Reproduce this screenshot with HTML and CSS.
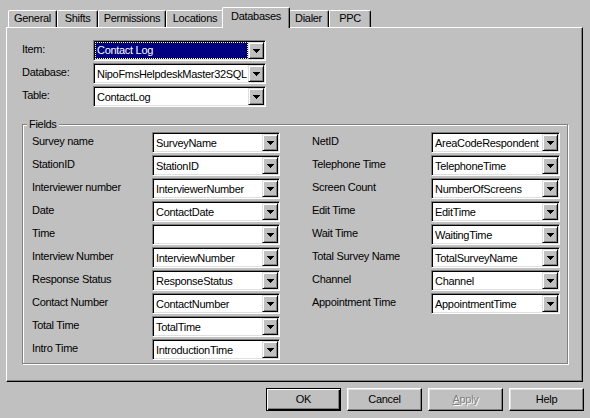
FILE: index.html
```html
<!DOCTYPE html>
<html>
<head>
<meta charset="utf-8">
<link rel="stylesheet" href="styles.css">
</head>
<body>
<div class="dialog">
  <div class="tabs">
    <div class="tab t-general">General</div>
    <div class="tab t-shifts">Shifts</div>
    <div class="tab t-perm">Permissions</div>
    <div class="tab t-loc">Locations</div>
    <div class="tab active t-db">Databases</div>
    <div class="tab t-dialer">Dialer</div>
    <div class="tab t-ppc">PPC</div>
  </div>
  <div class="panel">
    <div class="top-form">
      <span class="lbl">Item:</span>
      <div class="combo"><span class="val sel">Contact Log</span><span class="drop"></span></div>
      <span class="lbl">Database:</span>
      <div class="combo"><span class="val">NipoFmsHelpdeskMaster32SQL</span><span class="drop"></span></div>
      <span class="lbl">Table:</span>
      <div class="combo"><span class="val">ContactLog</span><span class="drop"></span></div>
    </div>
    <div class="group">
      <span class="legend">Fields</span>
      <div class="cols">
        <div class="col col-left">
          <span class="lbl">Survey name</span>
          <div class="combo"><span class="val">SurveyName</span><span class="drop"></span></div>
          <span class="lbl">StationID</span>
          <div class="combo"><span class="val">StationID</span><span class="drop"></span></div>
          <span class="lbl">Interviewer number</span>
          <div class="combo"><span class="val">InterviewerNumber</span><span class="drop"></span></div>
          <span class="lbl">Date</span>
          <div class="combo"><span class="val">ContactDate</span><span class="drop"></span></div>
          <span class="lbl">Time</span>
          <div class="combo"><span class="val"></span><span class="drop"></span></div>
          <span class="lbl">Interview Number</span>
          <div class="combo"><span class="val">InterviewNumber</span><span class="drop"></span></div>
          <span class="lbl">Response Status</span>
          <div class="combo"><span class="val">ResponseStatus</span><span class="drop"></span></div>
          <span class="lbl">Contact Number</span>
          <div class="combo"><span class="val">ContactNumber</span><span class="drop"></span></div>
          <span class="lbl">Total Time</span>
          <div class="combo"><span class="val">TotalTime</span><span class="drop"></span></div>
          <span class="lbl">Intro Time</span>
          <div class="combo"><span class="val">IntroductionTime</span><span class="drop"></span></div>
        </div>
        <div class="col col-right">
          <span class="lbl">NetID</span>
          <div class="combo"><span class="val">AreaCodeRespondent</span><span class="drop"></span></div>
          <span class="lbl">Telephone Time</span>
          <div class="combo"><span class="val">TelephoneTime</span><span class="drop"></span></div>
          <span class="lbl">Screen Count</span>
          <div class="combo"><span class="val">NumberOfScreens</span><span class="drop"></span></div>
          <span class="lbl">Edit Time</span>
          <div class="combo"><span class="val">EditTime</span><span class="drop"></span></div>
          <span class="lbl">Wait Time</span>
          <div class="combo"><span class="val">WaitingTime</span><span class="drop"></span></div>
          <span class="lbl">Total Survey Name</span>
          <div class="combo"><span class="val">TotalSurveyName</span><span class="drop"></span></div>
          <span class="lbl">Channel</span>
          <div class="combo"><span class="val">Channel</span><span class="drop"></span></div>
          <span class="lbl">Appointment Time</span>
          <div class="combo"><span class="val">AppointmentTime</span><span class="drop"></span></div>
        </div>
      </div>
    </div>
  </div>
  <div class="buttons">
    <div class="btn default">OK</div>
    <div class="btn">Cancel</div>
    <div class="btn disabled"><u>A</u>pply</div>
    <div class="btn">Help</div>
  </div>
</div>
</body>
</html>
```

FILE: styles.css
```css
* { box-sizing: border-box; }
html, body {
  margin: 0;
  padding: 0;
  background: #c0c0c0;
}
body {
  width: 590px;
  height: 418px;
  overflow: hidden;
  font-family: "Liberation Sans", Arial, sans-serif;
  font-size: 11px;
  letter-spacing: -0.3px;
  color: #000;
}
.dialog {
  padding-top: 7px;
}

/* Tabs */
.tabs {
  display: flex;
  align-items: flex-end;
  height: 20px;
  padding-left: 8px;
}
.tab {
  height: 17px;
  padding-top: 1px;
  line-height: 13px;
  text-align: center;
  white-space: nowrap;
  background: #c0c0c0;
  border-top: 1px solid #fff;
  border-left: 1px solid #fff;
  border-right: 1px solid #000;
  border-radius: 2px 2px 0 0;
  box-shadow: inset -1px 0 #808080;
}
.t-general { width: 49px; }
.t-shifts { width: 41px; }
.t-perm { width: 68px; }
.t-loc { width: 58px; }
.t-db { width: 68px; }
.t-dialer { width: 41px; }
.t-ppc { width: 42px; }
.tab.active {
  height: 21px;
  padding-top: 2px;
  margin: 0 -2px -1px -2px;
  position: relative;
  z-index: 2;
}

/* Panel */
.panel {
  margin-left: 6px;
  width: 577px;
  height: 355px;
  padding: 12px 0 0 15px;
  border-top: 1px solid #fff;
  border-left: 1px solid #fff;
  border-right: 1px solid #000;
  border-bottom: 1px solid #000;
  box-shadow: inset -1px -1px #808080;
}
.top-form {
  display: grid;
  grid-template-columns: 71px 173px;
  grid-auto-rows: 21px;
  row-gap: 2px;
  align-items: center;
}
.lbl {
  line-height: 13px;
  white-space: nowrap;
  padding-bottom: 2px;
}

/* Combo */
.combo {
  display: flex;
  height: 21px;
  background: #fff;
  border: 1px solid;
  border-color: #808080 #fff #fff #808080;
  box-shadow: inset 1px 1px #000, inset -1px -1px #dfdfdf;
  padding: 1px;
}
.val {
  flex: 1;
  min-width: 0;
  overflow: hidden;
  white-space: nowrap;
  line-height: 16px;
  padding: 1px 0 0 2px;
}
.val.sel {
  background: #000080;
  color: #fff;
  border: 1px dotted #ffff80;
  line-height: 14px;
  padding: 0 0 0 1px;
}
.drop {
  flex: none;
  width: 16px;
  height: 17px;
  background: #c0c0c0;
  border: 1px solid;
  border-color: #dfdfdf #000 #000 #dfdfdf;
  box-shadow: inset 1px 1px #fff, inset -1px -1px #808080;
  display: flex;
  align-items: center;
  justify-content: center;
}
.drop::after {
  content: "";
  width: 7px;
  height: 4px;
  margin-top: 1px;
  background:
    linear-gradient(#000, #000) 0 0 / 7px 1px no-repeat,
    linear-gradient(#000, #000) 1px 1px / 5px 1px no-repeat,
    linear-gradient(#000, #000) 2px 2px / 3px 1px no-repeat,
    linear-gradient(#000, #000) 3px 3px / 1px 1px no-repeat;
}

/* Group box */
.group {
  position: relative;
  margin-top: 17px;
  width: 546px;
  height: 240px;
  border: 1px solid #808080;
  box-shadow: 1px 1px 0 #fff, inset 1px 1px 0 #fff;
  padding: 7px 0 0 9px;
}
.legend {
  position: absolute;
  top: -7px;
  left: 4px;
  padding: 0 2px;
  line-height: 13px;
  background: #c0c0c0;
}
.cols {
  display: flex;
}
.col {
  display: grid;
  grid-auto-rows: 21px;
  row-gap: 2px;
  align-items: center;
  align-content: start;
}
.col-left {
  grid-template-columns: 120px 128px;
}
.col-right {
  margin-left: 32px;
  grid-template-columns: 119px 129px;
}

/* Buttons */
.buttons {
  display: flex;
  justify-content: flex-end;
  gap: 6px;
  margin-top: 6px;
  padding-right: 6px;
}
.btn {
  width: 75px;
  height: 23px;
  line-height: 20px;
  text-align: center;
  background: #c0c0c0;
  border: 1px solid;
  border-color: #fff #000 #000 #fff;
  box-shadow: inset -1px -1px #808080, inset 1px 1px #dfdfdf;
}
.btn.default {
  border-color: #000;
  box-shadow: inset 1px 1px #fff, inset -1px -1px #000, inset -2px -2px #808080;
}
.btn.disabled {
  color: #808080;
  text-shadow: 1px 1px 0 #fff;
}
```
